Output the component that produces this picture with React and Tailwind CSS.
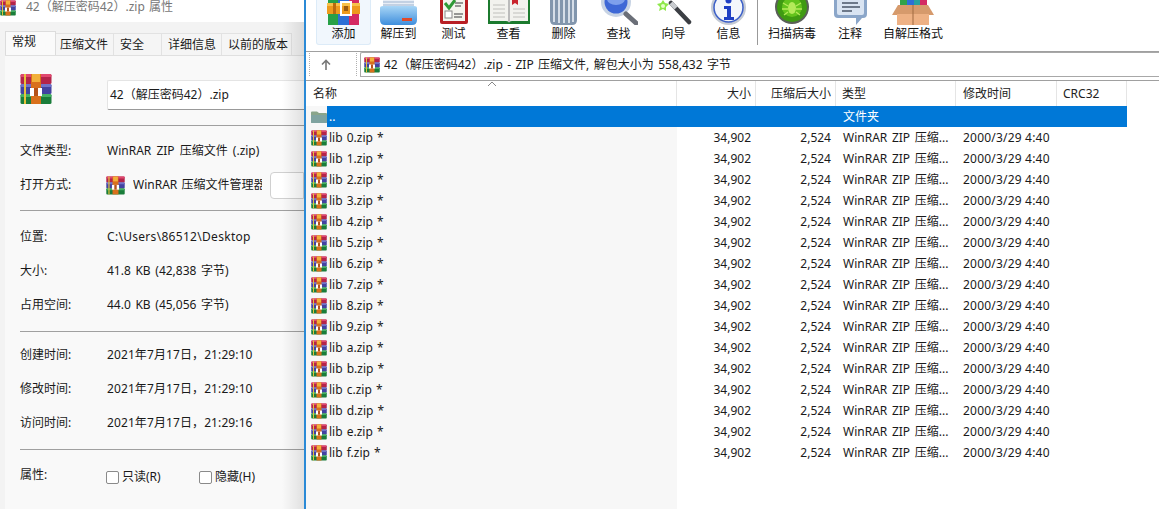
import React from "react";

const Rar = ({ s = 16 }) => (
  <svg width={s} height={s} viewBox="0 0 32 32" className="shrink-0">
    <rect x="0.5" y="1" width="31" height="10" rx="1.5" fill="#b3244a" />
    <rect x="0.5" y="1" width="31" height="3" rx="1.5" fill="#e0486f" />
    <rect x="0.5" y="11" width="31" height="10" rx="1.5" fill="#4242a0" />
    <rect x="0.5" y="11" width="31" height="3" rx="1.5" fill="#7072c8" />
    <rect x="0.5" y="21" width="31" height="10" rx="1.5" fill="#1a7d3a" />
    <rect x="0.5" y="21" width="31" height="3" rx="1.5" fill="#45b064" />
    <rect x="4" y="1" width="2" height="30" fill="#e6c13a" />
    <rect x="11" y="1" width="10" height="30" fill="#d9701c" />
    <rect x="12" y="1" width="8" height="8" fill="#f2b03a" />
    <rect x="10" y="15" width="12" height="8" fill="#fff" />
    <rect x="14" y="15" width="4" height="8" fill="#b5521a" />
  </svg>
);

const Folder = () => (
  <svg width="16" height="16" viewBox="0 0 16 16" className="shrink-0">
    <path d="M0 3.5 Q0 2.5 1 2.5 H6 L8 4 H15 Q16 4 16 5 V13 Q16 14 15 14 H1 Q0 14 0 13Z" fill="#8aa58a" />
    <path d="M0 6 H16 V13 Q16 14 15 14 H1 Q0 14 0 13Z" fill="#7fa3a0" />
  </svg>
);

const Add = () => (
  <svg width="33" height="25" viewBox="0 0 33 25">
    <rect x="1" y="0" width="10" height="25" fill="#27a047" />
    <rect x="11" y="0" width="11" height="25" fill="#2c6fd6" />
    <rect x="22" y="0" width="10" height="25" fill="#d42a63" />
    <rect x="0" y="3" width="33" height="11" fill="#ee9a1e" />
    <rect x="0" y="3" width="33" height="3" fill="#f7c04a" />
    <rect x="6" y="3" width="3" height="11" fill="#b96a10" />
    <rect x="14" y="2" width="10" height="13" fill="none" stroke="#fff" strokeWidth="2" />
    <rect x="17" y="6" width="4" height="5" fill="#9a5a10" />
  </svg>
);
const Extract = () => (
  <svg width="37" height="25" viewBox="0 0 37 25">
    <defs>
      <linearGradient id="fold" x1="0" y1="0" x2="0" y2="1">
        <stop offset="0" stopColor="#a8d6f6" />
        <stop offset="1" stopColor="#3f8edc" />
      </linearGradient>
    </defs>
    <rect x="3" y="0" width="31" height="8" fill="#e8eef6" />
    <path d="M3 2H34M3 5H34" stroke="#9db4d0" />
    <path d="M0 8 Q0 6 3 6 H34 Q37 6 37 8 V20 Q37 25 32 25 H5 Q0 25 0 20Z" fill="url(#fold)" />
    <rect x="22" y="18" width="10" height="3" fill="#e04a2a" />
  </svg>
);
const Test = () => (
  <svg width="28" height="25" viewBox="0 0 28 25">
    <path d="M0 0H28V22Q28 24 26 24H2Q0 24 0 22Z" fill="#b81f24" />
    <rect x="3" y="0" width="22" height="21" fill="#f4f4ee" />
    <path d="M5 3 L9 8 L15 0" stroke="#2f9a37" strokeWidth="3" fill="none" />
    <path d="M15 3H23M15 6H21M14 14H23M14 17H22" stroke="#777" strokeWidth="1.3" />
    <rect x="5" y="11" width="7" height="7" fill="#fff" stroke="#888" />
  </svg>
);
const Book = () => (
  <svg width="42" height="25" viewBox="0 0 42 25">
    <path d="M0 0H42V24H0Z" fill="#1c7a2e" />
    <path d="M2 0H20Q21 1 21 2 Q21 1 22 0H40V21H24Q21 21 21 23Q21 21 18 21H2Z" fill="#f2f2ee" />
    <path d="M5 5H17M5 9H17M5 13H17M5 17H17M25 9H37M25 13H37M25 17H37" stroke="#c0c0bc" strokeWidth="1.2" />
    <path d="M24 0H30V5L27 3L24 5Z" fill="#c8232c" />
    <rect x="20" y="0" width="2" height="22" fill="#bbb" />
  </svg>
);
const Trash = () => (
  <svg width="27" height="25" viewBox="0 0 27 25">
    <path d="M0 0H27V20Q27 25 22 25H5Q0 25 0 20Z" fill="#8296ad" />
    <path d="M4 0V22M9 0V23M14 0V23M19 0V23M23 0V22" stroke="#d6dee8" strokeWidth="2" />
  </svg>
);
const Search = () => (
  <svg width="38" height="25" viewBox="0 0 38 25">
    <circle cx="16" cy="2" r="15" fill="#c7d3e4" />
    <circle cx="16" cy="2" r="11.5" fill="#3e68d6" />
    <ellipse cx="16" cy="-1" rx="9" ry="6" fill="#7ea0ec" />
    <path d="M26 14 L36 23" stroke="#6b6f78" strokeWidth="5" strokeLinecap="round" />
  </svg>
);
const Wand = () => (
  <svg width="36" height="25" viewBox="0 0 36 25">
    <path d="M7 0 L9 3 L13 4 L10 7 L10 11 L7 9 L3 11 L4 7 L1 4 L5 3Z" fill="#8ee84a" />
    <circle cx="7" cy="6" r="2" fill="#e4ffc8" />
    <path d="M15 3 L33 22" stroke="#3c3f44" strokeWidth="4.5" strokeLinecap="round" />
    <path d="M15 3 L20 8" stroke="#c9ccd0" strokeWidth="4.5" />
  </svg>
);
const Info = () => (
  <svg width="35" height="25" viewBox="0 0 35 25">
    <circle cx="17.5" cy="7.5" r="17.5" fill="#c4cad4" />
    <circle cx="17.5" cy="7.5" r="14.5" fill="#f3f6fb" stroke="#3b5fc8" strokeWidth="1.5" />
    <circle cx="17.5" cy="0.5" r="3" fill="#1f3fc4" />
    <path d="M13 6H20V17H23V20H13V17H16V9H13Z" fill="#1f3fc4" />
  </svg>
);
const Scan = () => (
  <svg width="34" height="25" viewBox="0 0 34 25">
    <circle cx="17" cy="7" r="17" fill="#5a5f58" />
    <circle cx="17" cy="7" r="15" fill="#3f9a12" />
    <circle cx="17" cy="7" r="10" fill="#63c31c" />
    <ellipse cx="17" cy="8" rx="4" ry="6" fill="#b5ea5a" />
    <path d="M8 3L13 6M26 3L21 6M7 9H13M27 9H21M9 15L13 12M25 15L21 12" stroke="#b5ea5a" strokeWidth="1.3" />
  </svg>
);
const Note = () => (
  <svg width="33" height="25" viewBox="0 0 33 25">
    <path d="M0 0H33V14Q33 18 29 18H28L22 25V18H4Q0 18 0 14Z" fill="#8ba6c9" />
    <path d="M3 0H30V13Q30 15 28 15H5Q3 15 3 13Z" fill="#d9e4f2" />
    <path d="M8 3H24M8 7H26M8 11H18" stroke="#4a5568" strokeWidth="1.4" />
  </svg>
);
const Box = () => (
  <svg width="42" height="25" viewBox="0 0 42 25">
    <rect x="8" y="0" width="7" height="6" fill="#2fa24a" />
    <rect x="15" y="0" width="7" height="6" fill="#2c6fd6" />
    <rect x="22" y="0" width="6" height="6" fill="#27a0a0" />
    <rect x="28" y="0" width="7" height="6" fill="#d42a63" />
    <path d="M6 5H36L42 15H0Z" fill="#d69a6c" />
    <rect x="5" y="14" width="32" height="11" fill="#eeb184" />
    <rect x="20.5" y="5" width="1" height="20" fill="#a06a40" />
  </svg>
);

const Tool = ({ w = "w-[55px]", label, active, children }) => (
  <div className={`${w} h-[45px] flex flex-col items-center shrink-0 ${active ? "bg-[#f1f7fd] border border-t-0 border-[#dcebf8] rounded-b-[3px]" : ""}`}>
    <div className="h-[25px] flex justify-center">{children}</div>
    <div className="mt-[1px] leading-4 text-[12px] text-[#111] whitespace-nowrap">{label}</div>
  </div>
);

const Sep = () => <div className="h-px bg-[#a0a0a0] ml-[20px]" />;

const Row = ({ label, children, className = "" }) => (
  <div className="h-[34px] flex items-center">
    <div className="w-[107px] pl-[20px] shrink-0">{label}</div>
    <div className={`whitespace-nowrap ${className}`}>{children}</div>
  </div>
);

const names = "0123456789abcdef".split("");

export default function App() {
  return (
    <div className="w-[1159px] h-[509px] overflow-hidden flex bg-white text-[12px] text-[#1a1a1a] font-['Noto_Sans','Noto_Sans_CJK_SC',sans-serif]">
      <div className="w-[304px] shrink-0 relative flex flex-col overflow-hidden bg-[#f3f3f3]">
        <div className="h-[22px] bg-white flex items-start shrink-0 overflow-hidden">
          <Rar s={16} />
          <span className="ml-[10px] text-[#777] -mt-[1px] leading-4 whitespace-nowrap [word-spacing:1px]">42（解压密码42）.zip 属性</span>
        </div>
        <div className="h-[33px] pt-[9px] pl-[5px] flex items-end shrink-0">
          <div className="w-[51px] h-[24px] bg-[#fafafa] border border-b-0 border-[#dcdcdc] pl-[6px] leading-5">常规</div>
          {[["压缩文件", "w-[58px]", "pl-[4px]"], ["安全", "w-[48px]", "pl-[6px]"], ["详细信息", "w-[60px]", "pl-[6px]"], ["以前的版本", "w-[70px]", "pl-[6px]"]].map(([t, w, p]) => (
            <div key={t} className={`${w} ${p} h-[22px] bg-[#f5f5f5] border border-b-0 border-l-0 border-[#e2e2e2] flex items-center whitespace-nowrap`}>{t}</div>
          ))}
        </div>
        <div className="flex-1 ml-[5px] bg-[#f9f9f9] border-t border-[#e0e0e0]">
          <div className="-ml-[5px] flex flex-col">
            <div className="h-[69px] flex">
              <div className="w-[107px] pl-[20px] pt-[17px] shrink-0"><Rar s={32} /></div>
              <div className="flex-1 mt-[24px] h-[30px] bg-white border-b border-[#999] border-l border-l-[#e4e4e4] border-t border-t-[#e4e4e4] pl-[2px] flex items-center rounded-l-[2px]">42（解压密码42）.zip</div>
            </div>
            <Sep />
            <div className="h-[50px] flex items-center">
              <div className="w-[107px] pl-[20px] shrink-0">文件类型:</div>
              <div className="whitespace-nowrap [word-spacing:2px]">WinRAR ZIP 压缩文件 (.zip)</div>
            </div>
            <div className="h-[34px] -mt-[8px] flex items-center mb-[8px]">
              <div className="w-[106px] pl-[20px] shrink-0">打开方式:</div>
              <Rar s={19} />
              <div className="ml-[8px] w-[129px] overflow-hidden whitespace-nowrap [word-spacing:1px]">WinRAR 压缩文件管理器</div>
              <div className="ml-[8px] flex-1 h-[27px] bg-white border border-[#d0d0d0] rounded-l-[4px]" />
            </div>
            <Sep />
            <div className="mt-[9px]">
              <Row label="位置:" className="tracking-[0.3px]">C:\Users\86512\Desktop</Row>
              <Row label="大小:" className="[word-spacing:1.5px]">41.8 KB (42,838 字节)</Row>
              <Row label="占用空间:" className="[word-spacing:1.5px]">44.0 KB (45,056 字节)</Row>
            </div>
            <div className="mt-[9px]"><Sep /></div>
            <div className="mt-[6px]">
              <Row label="创建时间:" className="tracking-[0.1px]">2021年7月17日，21:29:10</Row>
              <Row label="修改时间:" className="tracking-[0.1px]">2021年7月17日，21:29:10</Row>
              <Row label="访问时间:" className="tracking-[0.1px]">2021年7月17日，21:29:16</Row>
            </div>
            <div className="mt-[9px]"><Sep /></div>
            <div className="mt-[16px] flex h-[18px] items-start">
              <div className="w-[106px] pl-[20px] shrink-0">属性:</div>
              <div className="flex items-center pt-[2px]">
                <span className="w-[13px] h-[13px] border border-[#8a8a8a] rounded-[2px] bg-white" />
                <span className="ml-[3px] w-[77px]">只读(R)</span>
                <span className="w-[13px] h-[13px] border border-[#8a8a8a] rounded-[2px] bg-white" />
                <span className="ml-[3px]">隐藏(H)</span>
              </div>
            </div>
          </div>
        </div>
        <div className="absolute right-0 top-[22px] bottom-0 w-[22px] bg-gradient-to-r from-transparent to-black/10" />
      </div>

      <div className="w-[2px] bg-[#2b8ad6] shrink-0" />

      <div className="flex-1 min-w-0 flex flex-col">
        <div className="h-[52px] shrink-0 border-b border-[#a0a0a0] flex pl-[10px] items-start">
          <Tool label="添加" active><Add /></Tool>
          <Tool label="解压到"><Extract /></Tool>
          <Tool label="测试"><Test /></Tool>
          <Tool label="查看"><Book /></Tool>
          <Tool label="删除"><Trash /></Tool>
          <Tool label="查找"><Search /></Tool>
          <Tool label="向导"><Wand /></Tool>
          <Tool label="信息"><Info /></Tool>
          <div className="ml-[1px] w-px h-[45px] bg-[#999] shrink-0" />
          <Tool w="w-[68px]" label="扫描病毒"><Scan /></Tool>
          <Tool w="w-[48px]" label="注释"><Note /></Tool>
          <Tool w="w-[78px]" label="自解压格式"><Box /></Tool>
        </div>
        <div className="h-[25px] shrink-0 flex items-center">
          <div className="w-[48px] h-[23px] ml-[3px] border-l border-r border-dotted border-[#b0b0b0] flex justify-center items-center mr-[3px] pr-[14px]">
            <svg width="12" height="12" viewBox="0 0 12 12"><path d="M6 11V2M2 5.5L6 1.5L10 5.5" stroke="#777" strokeWidth="1.6" fill="none" /></svg>
          </div>
          <div className="flex-1 h-[25px] bg-white border-l border-t border-b border-[#a8a8a8] rounded-tl-[2px] flex items-center pl-[3px]">
            <Rar s={16} />
            <span className="ml-[4px] whitespace-nowrap [word-spacing:1.3px]">42（解压密码42）.zip - ZIP 压缩文件, 解包大小为 558,432 字节</span>
          </div>
        </div>
        <div className="h-[4px] shrink-0 border-b border-[#a0a0a0]" />
        <div className="h-[25px] shrink-0 flex relative text-[#222]">
          <div className="w-[371px] border-r border-[#e5e5e5] pl-[7px] leading-[25px]">名称</div>
          <div className="w-[79px] border-r border-[#e5e5e5] pr-[4px] text-right leading-[25px]">大小</div>
          <div className="w-[80px] border-r border-[#e5e5e5] pr-[4px] text-right leading-[25px]">压缩后大小</div>
          <div className="w-[120px] border-r border-[#e5e5e5] pl-[6px] leading-[25px]">类型</div>
          <div className="w-[101px] border-r border-[#e5e5e5] pl-[7px] leading-[25px]">修改时间</div>
          <div className="w-[70px] border-r border-[#e5e5e5] pl-[6px] leading-[25px]">CRC32</div>
          <svg className="absolute left-[181px] top-0" width="10" height="6" viewBox="0 0 10 6"><path d="M1 5L5 1L9 5" stroke="#888" fill="none" /></svg>
        </div>
        <div className="flex-1 flex flex-col min-h-0 text-[#1a1a1a]">
          <div className="h-[21px] shrink-0 flex items-center">
            <div className="w-[21px] h-full bg-[#f7f7f7] pl-[5px] flex items-center shrink-0"><Folder /></div>
            <div className="w-[800px] h-full bg-[#0078d7] flex items-center text-white">
              <div className="w-[350px] pl-[2px] shrink-0">..</div>
              <div className="w-[159px] shrink-0" />
              <div className="pl-[7px]">文件夹</div>
            </div>
          </div>
          {names.map((n) => (
            <div key={n} className="h-[21px] shrink-0 flex items-center">
              <div className="w-[371px] h-full bg-[#f7f7f7] flex items-center pl-[5px] shrink-0 whitespace-nowrap">
                <Rar s={16} />
                <span className="ml-[2px] [word-spacing:1px]">lib {n}.zip *</span>
              </div>
              <div className="w-[79px] pr-[5px] text-right shrink-0">34,902</div>
              <div className="w-[80px] pr-[5px] text-right shrink-0">2,524</div>
              <div className="w-[120px] pl-[7px] shrink-0 whitespace-nowrap [word-spacing:1.5px]">WinRAR ZIP 压缩...</div>
              <div className="w-[101px] pl-[7px] shrink-0 whitespace-nowrap tracking-[0.2px]">2000/3/29 4:40</div>
            </div>
          ))}
          <div className="flex-1 w-[371px] bg-[#f7f7f7]" />
        </div>
      </div>
    </div>
  );
}
